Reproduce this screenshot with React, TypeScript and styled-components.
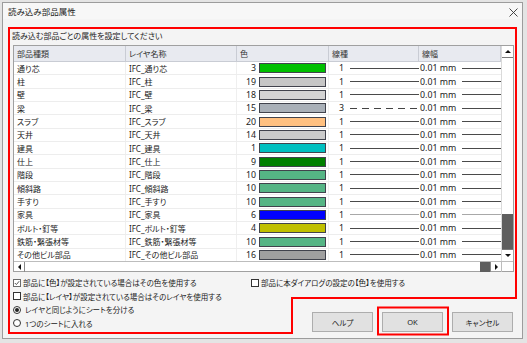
import React from 'react';
import styled, { createGlobalStyle } from 'styled-components';

const Global = createGlobalStyle`
  html, body { margin: 0; padding: 0; background: #ececec; }
  body {
    font-family: "Noto Sans", "Noto Sans CJK JP", sans-serif;
    font-feature-settings: "palt";
    color: #222;
  }
  #root { width: 527px; height: 343px; }
`;

type Row = { k: string; l: string; n: number; c: string; dash?: boolean; lt?: number; light?: boolean };

const GREEN = '#55b585';
const rows: Row[] = [
  { k: '通り芯', l: 'IFC_通り芯', n: 3, c: '#00c000' },
  { k: '柱', l: 'IFC_柱', n: 19, c: '#c6c6c6' },
  { k: '壁', l: 'IFC_壁', n: 18, c: '#d4d4d4' },
  { k: '梁', l: 'IFC_梁', n: 15, c: '#a9b0b8', dash: true, lt: 3 },
  { k: 'スラブ', l: 'IFC_スラブ', n: 20, c: '#ffc080' },
  { k: '天井', l: 'IFC_天井', n: 14, c: '#cbcbcb' },
  { k: '建具', l: 'IFC_建具', n: 1, c: '#00c0c0' },
  { k: '仕上', l: 'IFC_仕上', n: 9, c: '#008000' },
  { k: '階段', l: 'IFC_階段', n: 10, c: GREEN },
  { k: '傾斜路', l: 'IFC_傾斜路', n: 10, c: GREEN },
  { k: '手すり', l: 'IFC_手すり', n: 10, c: GREEN },
  { k: '家具', l: 'IFC_家具', n: 6, c: '#0000ff', light: true },
  { k: 'ボルト・釘等', l: 'IFC_ボルト・釘等', n: 4, c: '#c0c000' },
  { k: '鉄筋・緊張材等', l: 'IFC_鉄筋・緊張材等', n: 10, c: GREEN },
  { k: 'その他ビル部品', l: 'IFC_その他ビル部品', n: 16, c: '#a0a0a0' },
];

const COLS = '112px 111px 92px 90px 82px';

const Root = styled.div`
  position: relative;
  width: 527px;
  height: 343px;
  box-sizing: border-box;
  padding: 2px 4px 4px 2px;
  background: #e4e4e4;
`;

const Window = styled.div`
  height: 100%;
  box-sizing: border-box;
  border: 1px solid #9c9c9c;
  background: #f4f4f4;
  display: flex;
  flex-direction: column;
`;

const TitleBar = styled.div`
  height: 16px;
  flex: none;
  display: flex;
  align-items: center;
  justify-content: space-between;
  padding: 0 4px 0 5px;
  background: #f7f7f7;
  font-size: 8.5px;
  color: #222;
`;

const Close = styled.svg`
  width: 9px;
  height: 9px;
  display: block;
  margin-top: 3px;
`;

const Client = styled.div`
  flex: 1;
  display: flex;
  flex-direction: column;
  padding: 11px 8px 0 10px;
`;

const Label = styled.div`
  height: 12px;
  line-height: 12px;
  font-size: 8px;
  margin: 0 0 3px -1px;
  white-space: nowrap;
`;

const GridFrame = styled.div`
  width: 501px;
  height: 227px;
  box-sizing: border-box;
  border: 1px solid #a0a0a0;
  background: #fff;
  display: flex;
  flex-direction: column;
`;

const GridMain = styled.div`
  height: 215px;
  display: flex;
  flex: none;
`;

const Table = styled.div`
  flex: 1;
  overflow: hidden;
  display: flex;
  flex-direction: column;
`;

const HeaderRow = styled.div`
  height: 16px;
  flex: none;
  display: grid;
  grid-template-columns: ${COLS};
  background: #e8eaf0;
  border-bottom: 1px solid #c9ccd4;
  box-sizing: border-box;
`;

const HeaderCell = styled.div`
  border-right: 1px solid #c9ccd4;
  padding-left: 3px;
  font-size: 8px;
  line-height: 15px;
  color: #333;
  white-space: nowrap;
`;

const DataRow = styled.div`
  height: 13.35px;
  flex: none;
  display: grid;
  grid-template-columns: ${COLS};
  box-sizing: border-box;
  border-bottom: 1px solid #ededed;
`;

const Cell = styled.div`
  display: flex;
  align-items: center;
  padding-left: 3px;
  font-size: 8px;
  white-space: nowrap;
  overflow: hidden;
  border-right: 1px solid #efefef;
`;

const ColorCell = styled(Cell)`
  padding-left: 0;
`;

const Num = styled.span`
  font-size: 8.8px;
  font-family: "Noto Sans", sans-serif;
  color: #222;
`;

const ColorNum = styled(Num)`
  width: 19px;
  text-align: right;
  margin-right: 3px;
`;

const Swatch = styled.span<{ $c: string }>`
  width: 67px;
  height: 10px;
  box-sizing: border-box;
  border: 1px solid #41434d;
  background: ${(p) => p.$c};
`;

const LineCell = styled(Cell)`
  padding-left: 0;
  border-right: none;
`;

const LtNum = styled(Num)`
  width: 15px;
  text-align: right;
  margin-right: 2px;
`;

const Stroke = styled.span<{ $dash?: boolean; $light?: boolean; $gap?: number }>`
  flex: 1;
  height: 1px;
  margin-left: ${(p) => p.$gap ?? 0}px;
  background: ${(p) =>
    p.$dash
      ? 'repeating-linear-gradient(to right, #444 0 7px, transparent 7px 12px)'
      : p.$light
      ? '#a8a8a8'
      : '#4a4a4a'};
`;

const WidthText = styled(Num)`
  margin-left: 1px;
`;

const VScroll = styled.div`
  width: 12px;
  flex: none;
  display: flex;
  flex-direction: column;
  border-left: 1px solid #dadada;
  box-sizing: border-box;
  background: #fff;
`;

const VArrow = styled.div<{ $down?: boolean }>`
  height: 12px;
  flex: none;
  display: flex;
  align-items: center;
  justify-content: center;
  border-${(p) => (p.$down ? 'top' : 'bottom')}: 1px solid #7a7a7a;
  box-sizing: border-box;
  &::after {
    content: '';
    border-left: 3px solid transparent;
    border-right: 3px solid transparent;
    ${(p) => (p.$down ? 'border-top: 3px solid #111;' : 'border-bottom: 3px solid #111;')}
  }
`;

const VTrack = styled.div`
  flex: 1;
  display: flex;
  flex-direction: column;
  justify-content: flex-end;
`;

const VThumb = styled.div`
  height: 35px;
  background: #5e5e5e;
`;

const GridBottom = styled.div`
  height: 10px;
  flex: none;
  display: flex;
  border-top: 1px solid #bdbdbd;
`;

const HScroll = styled.div`
  flex: 1;
  display: flex;
  align-items: stretch;
`;

const HArrow = styled.div<{ $right?: boolean }>`
  width: 11px;
  flex: none;
  display: flex;
  align-items: center;
  justify-content: center;
  border-${(p) => (p.$right ? 'left' : 'right')}: 1px solid #8a8a8a;
  box-sizing: border-box;
  &::after {
    content: '';
    border-top: 3px solid transparent;
    border-bottom: 3px solid transparent;
    ${(p) => (p.$right ? 'border-left: 3px solid #111;' : 'border-right: 3px solid #111;')}
  }
`;

const HTrack = styled.div`
  flex: 1;
  display: flex;
  justify-content: flex-end;
`;

const HThumb = styled.div`
  width: 10px;
  background: #5e5e5e;
`;

const Corner = styled.div`
  width: 12px;
  flex: none;
  border-left: 1px solid #bdbdbd;
  box-sizing: border-box;
`;

const Bottom = styled.div`
  margin-top: 4px;
  display: grid;
  grid-template-columns: 1fr auto;
  grid-template-rows: repeat(4, 13.5px);
`;

const OptRow = styled.div`
  display: flex;
  align-items: center;
  grid-column: 1 / -1;
`;

const OptCol = styled.div`
  grid-column: 1;
  grid-row: 2 / span 3;
  display: grid;
  grid-template-rows: repeat(3, 13.5px);
`;

const Opt = styled.label<{ $w?: number }>`
  display: flex;
  align-items: center;
  gap: 2px;
  font-size: 7.5px;
  white-space: nowrap;
  color: #222;
  ${(p) => (p.$w ? `width: ${p.$w}px; flex: none;` : '')}
`;

const Box = styled.span<{ $gray?: boolean }>`
  width: 8px;
  height: 8px;
  box-sizing: border-box;
  border: 1px solid ${(p) => (p.$gray ? '#6a6a6a' : '#333')};
  background: #fff;
  display: flex;
  align-items: center;
  justify-content: center;
  flex: none;
`;

const Radio = styled.span<{ $on?: boolean }>`
  width: 8px;
  height: 8px;
  box-sizing: border-box;
  border-radius: 50%;
  border: 1px solid #333;
  background: #fff;
  display: flex;
  align-items: center;
  justify-content: center;
  flex: none;
  margin-right: 2px;
  &::after {
    content: '';
    width: 4px;
    height: 4px;
    border-radius: 50%;
    background: ${(p) => (p.$on ? '#222' : 'transparent')};
  }
`;

const Buttons = styled.div`
  grid-column: 2;
  grid-row: 2 / span 3;
  align-self: end;
  display: flex;
  gap: 9px;
  margin: 0 1px -2px 0;
`;

const Button = styled.button`
  width: 61px;
  height: 20px;
  box-sizing: border-box;
  border: 1px solid #adadad;
  background: #e1e1e1;
  font-family: "Noto Sans", "Noto Sans CJK JP", sans-serif;
  font-feature-settings: "palt";
  font-size: 7.5px;
  color: #222;
  padding: 0;
`;

const Overlay = styled.svg`
  position: absolute;
  left: 0;
  top: 0;
  pointer-events: none;
`;

export default function App() {
  return (
    <Root>
      <Global />
      <Window>
        <TitleBar>
          <span>読み込み部品属性</span>
          <Close viewBox="0 0 9 9">
            <path d="M0.5 0.5 L8.5 8.5 M8.5 0.5 L0.5 8.5" stroke="#333" strokeWidth="0.9" fill="none" />
          </Close>
        </TitleBar>
        <Client>
          <Label>読み込む部品ごとの属性を設定してください</Label>
          <GridFrame>
            <GridMain>
              <Table>
                <HeaderRow>
                  <HeaderCell>部品種類</HeaderCell>
                  <HeaderCell>レイヤ名称</HeaderCell>
                  <HeaderCell>色</HeaderCell>
                  <HeaderCell>線種</HeaderCell>
                  <HeaderCell>線幅</HeaderCell>
                </HeaderRow>
                {rows.map((r) => (
                  <DataRow key={r.k}>
                    <Cell>{r.k}</Cell>
                    <Cell>{r.l}</Cell>
                    <ColorCell>
                      <ColorNum>{r.n}</ColorNum>
                      <Swatch $c={r.c} />
                    </ColorCell>
                    <LineCell>
                      <LtNum>{r.lt ?? 1}</LtNum>
                      <Stroke $gap={4} $dash={r.dash} $light={r.light} />
                    </LineCell>
                    <LineCell>
                      <WidthText>0.01 mm</WidthText>
                      <Stroke $gap={6} $light={r.light} />
                    </LineCell>
                  </DataRow>
                ))}
              </Table>
              <VScroll>
                <VArrow />
                <VTrack>
                  <VThumb />
                </VTrack>
                <VArrow $down />
              </VScroll>
            </GridMain>
            <GridBottom>
              <HScroll>
                <HArrow />
                <HTrack>
                  <HThumb />
                </HTrack>
                <HArrow $right />
              </HScroll>
              <Corner />
            </GridBottom>
          </GridFrame>
          <Bottom>
            <OptRow>
              <Opt $w={238}>
                <Box $gray>
                  <svg width="6" height="6" viewBox="0 0 6 6">
                    <path d="M0.8 3 L2.4 4.6 L5.2 1.2" stroke="#555" strokeWidth="1" fill="none" />
                  </svg>
                </Box>
                部品に【色】が設定されている場合はその色を使用する
              </Opt>
              <Opt>
                <Box />
                部品に本ダイアログの設定の【色】を使用する
              </Opt>
            </OptRow>
            <OptCol>
              <Opt>
                <Box />
                部品に【レイヤ】が設定されている場合はそのレイヤを使用する
              </Opt>
              <Opt>
                <Radio $on />
                レイヤと同じようにシートを分ける
              </Opt>
              <Opt>
                <Radio />
                1つのシートに入れる
              </Opt>
            </OptCol>
            <Buttons>
              <Button>ヘルプ</Button>
              <Button>OK</Button>
              <Button>キャンセル</Button>
            </Buttons>
          </Bottom>
        </Client>
      </Window>
      <Overlay width="527" height="343" viewBox="0 0 527 343">
        <path d="M9 28 H516 V298 H292 V333 H9 Z" stroke="#ff0000" strokeWidth="2" fill="none" />
        <rect x="378" y="307.5" width="70" height="27" stroke="#ff0000" strokeWidth="2" fill="none" />
      </Overlay>
    </Root>
  );
}
